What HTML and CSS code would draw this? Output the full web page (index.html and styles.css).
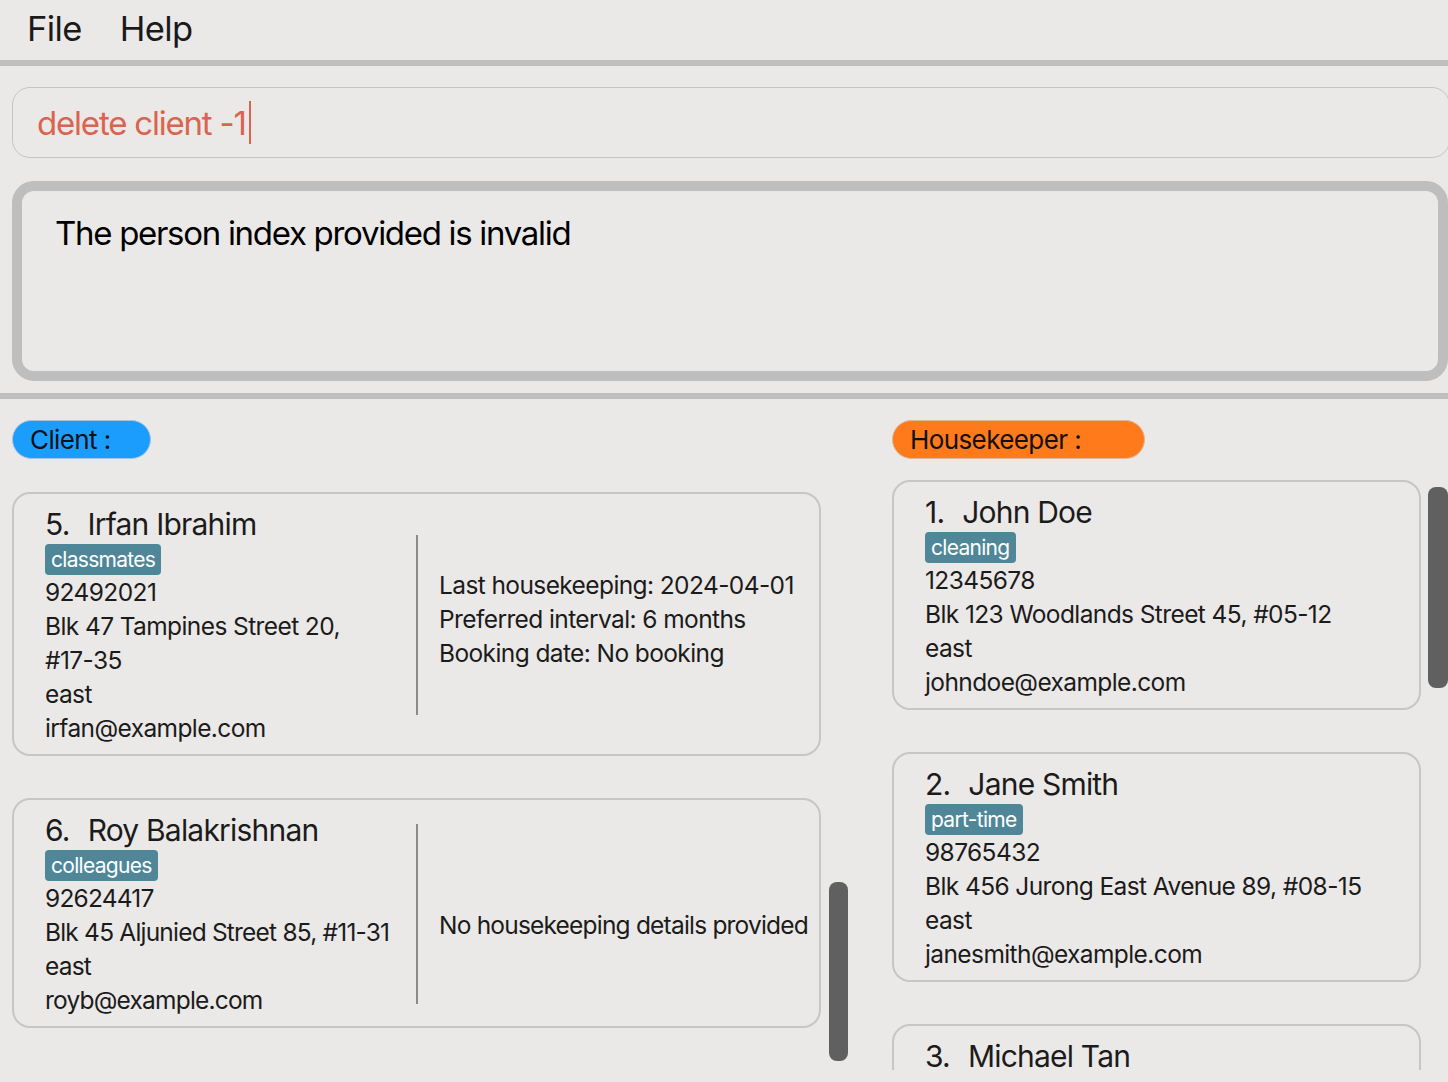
FILE: index.html
```html
<!DOCTYPE html>
<html lang="en">
<head>
<meta charset="utf-8">
<title>Housekeeping</title>
<link rel="stylesheet" href="styles.css">
</head>
<body>
<div class="app">
  <div class="menubar">
    <span class="menu-item">File</span>
    <span class="menu-item">Help</span>
  </div>

  <div class="cmd-wrap">
    <div class="cmd">
      <span class="cmd-text">delete client -1</span><span class="caret"></span>
    </div>
  </div>

  <div class="result-wrap">
    <div class="result">The person index provided is invalid</div>
  </div>

  <div class="lists">
    <div class="col client-col">
      <div class="pill client-pill">Client :</div>
      <div class="list-body client-body">
        <div class="cards">
          <div class="card client-card">
            <div class="left">
              <div class="name"><span class="idx">5.</span>Irfan Ibrahim</div>
              <div class="tags"><span class="tag">classmates</span></div>
              <div class="line">92492021</div>
              <div class="line">Blk 47 Tampines Street 20,<br>#17-35</div>
              <div class="line">east</div>
              <div class="line">irfan@example.com</div>
            </div>
            <div class="divider"></div>
            <div class="right details">
              <div class="line">Last housekeeping: 2024-04-01</div>
              <div class="line">Preferred interval: 6 months</div>
              <div class="line">Booking date: No booking</div>
            </div>
          </div>
          <div class="card client-card condensed">
            <div class="left">
              <div class="name"><span class="idx">6.</span>Roy Balakrishnan</div>
              <div class="tags"><span class="tag">colleagues</span></div>
              <div class="line">92624417</div>
              <div class="line nowrap">Blk 45 Aljunied Street 85, #11-31</div>
              <div class="line">east</div>
              <div class="line">royb@example.com</div>
            </div>
            <div class="divider"></div>
            <div class="right nodetails">
              <div class="line">No housekeeping details provided</div>
            </div>
          </div>
        </div>
        <div class="track client-track"><div class="thumb"></div></div>
      </div>
    </div>

    <div class="col hk-col">
      <div class="pill hk-pill">Housekeeper :</div>
      <div class="list-body hk-body">
        <div class="cards">
          <div class="card hk-card">
            <div class="name"><span class="idx">1.</span>John Doe</div>
            <div class="tags"><span class="tag">cleaning</span></div>
            <div class="line">12345678</div>
            <div class="line">Blk 123 Woodlands Street 45, #05-12</div>
            <div class="line">east</div>
            <div class="line">johndoe@example.com</div>
          </div>
          <div class="card hk-card">
            <div class="name"><span class="idx">2.</span>Jane Smith</div>
            <div class="tags"><span class="tag">part-time</span></div>
            <div class="line">98765432</div>
            <div class="line">Blk 456 Jurong East Avenue 89, #08-15</div>
            <div class="line">east</div>
            <div class="line">janesmith@example.com</div>
          </div>
          <div class="card hk-card partial">
            <div class="name"><span class="idx">3.</span>Michael Tan</div>
          </div>
        </div>
        <div class="track hk-track"><div class="thumb"></div></div>
      </div>
    </div>
  </div>
</div>
</body>
</html>
```

FILE: styles.css
```css
* { box-sizing: border-box; }

html, body {
  margin: 0;
  padding: 0;
  background: #ebe9e7;
}

body {
  font-family: Inter, "Liberation Sans", sans-serif;
  color: #1b1b1b;
  width: 1448px;
  height: 1082px;
  overflow: hidden;
}

.app {
  display: flex;
  flex-direction: column;
  height: 1082px;
}

/* Menu bar */
.menubar {
  height: 66px;
  border-bottom: 6px solid #bfbfbf;
  display: flex;
  align-items: center;
  gap: 38px;
  padding-left: 27px;
  padding-bottom: 4px;
}

.menu-item {
  font-size: 34.5px;
  letter-spacing: -0.6px;
  color: #1a1a1a;
}

/* Command box */
.cmd-wrap {
  padding: 21px 0 0 12px;
  margin-right: -2px;
}

.cmd {
  height: 71px;
  border: 1.5px solid #c4c4c4;
  border-radius: 18px;
  display: flex;
  align-items: center;
  padding-left: 24px;
}

.cmd-text {
  font-size: 33px;
  letter-spacing: -1.2px;
  color: #d9644f;
}

.caret {
  width: 2px;
  height: 43px;
  background: #d9644f;
  margin-left: 3px;
}

/* Result box */
.result-wrap {
  padding: 23px 0 0 12px;
}

.result {
  height: 200px;
  border: 10px solid #bebebe;
  border-radius: 22px;
  padding: 22px 0 0 33px;
  font-size: 33px;
  letter-spacing: -1.3px;
  color: #000;
}

/* Lists */
.lists {
  margin-top: 12px;
  border-top: 6px solid #bfbfbf;
  display: flex;
  flex: 1;
  min-height: 0;
  padding: 21px 0 12px 12px;
  gap: 44px;
}

.col {
  display: flex;
  flex-direction: column;
  min-height: 0;
}

.client-col { width: 836px; }
.hk-col { width: 556px; }

.pill {
  height: 39px;
  border-radius: 20px;
  font-size: 26px;
  letter-spacing: -0.6px;
  display: flex;
  align-items: center;
  padding-left: 17px;
  padding-bottom: 1px;
  color: #111;
}

.client-pill {
  width: 139px;
  background: #1b9dfe;
  border: 1.5px solid #a8c4dc;
}

.hk-pill {
  width: 253px;
  background: #fe7a1b;
  border: 1.5px solid #dcb79c;
}

.list-body {
  display: flex;
  flex: 1;
  min-height: 0;
  overflow: hidden;
}

.client-body { margin-top: 33px; gap: 8px; }
.hk-body { margin-top: 21px; gap: 7px; }

.cards {
  display: flex;
  flex-direction: column;
  gap: 42px;
  overflow: hidden;
}

.client-body .cards { width: 809px; }
.hk-body .cards { width: 529px; }

.card {
  flex-shrink: 0;
  border: 2px solid #c6c6c6;
  border-radius: 18px;
  padding: 11px 0 9px 31px;
}

.partial { height: 120px; }

.client-card {
  display: flex;
  align-items: center;
}

.left { width: 371px; flex-shrink: 0; }

.divider {
  width: 2px;
  height: 180px;
  background: #8a8a8a;
  flex-shrink: 0;
}

.right { padding-left: 21px; }
.details { margin-bottom: 13px; }
.nodetails { margin-top: 22px; }

.name {
  height: 38px;
  font-size: 30px;
  letter-spacing: -0.8px;
  line-height: 39px;
  color: #1b1b1b;
}

.idx { margin-right: 18px; }

.tags { height: 32px; display: flex; align-items: center; }

.tag {
  display: inline-block;
  height: 31px;
  line-height: 31px;
  background: #4f8799;
  color: #fff;
  font-size: 21px;
  letter-spacing: -0.7px;
  padding: 0 6px;
  border-radius: 4px;
}

.line {
  font-size: 24.5px;
  line-height: 34px;
  letter-spacing: -0.6px;
  color: #1b1b1b;
}

.condensed .line { letter-spacing: -0.8px; }

.nowrap { white-space: nowrap; }

.track {
  display: flex;
  flex-direction: column;
}

.client-track { width: 19px; }
.hk-track { width: 20px; }

.thumb {
  background: #606060;
  border-radius: 8px;
}

.client-track .thumb { margin-top: 390px; height: 179px; }
.hk-track .thumb { margin-top: 7px; height: 201px; }
```
